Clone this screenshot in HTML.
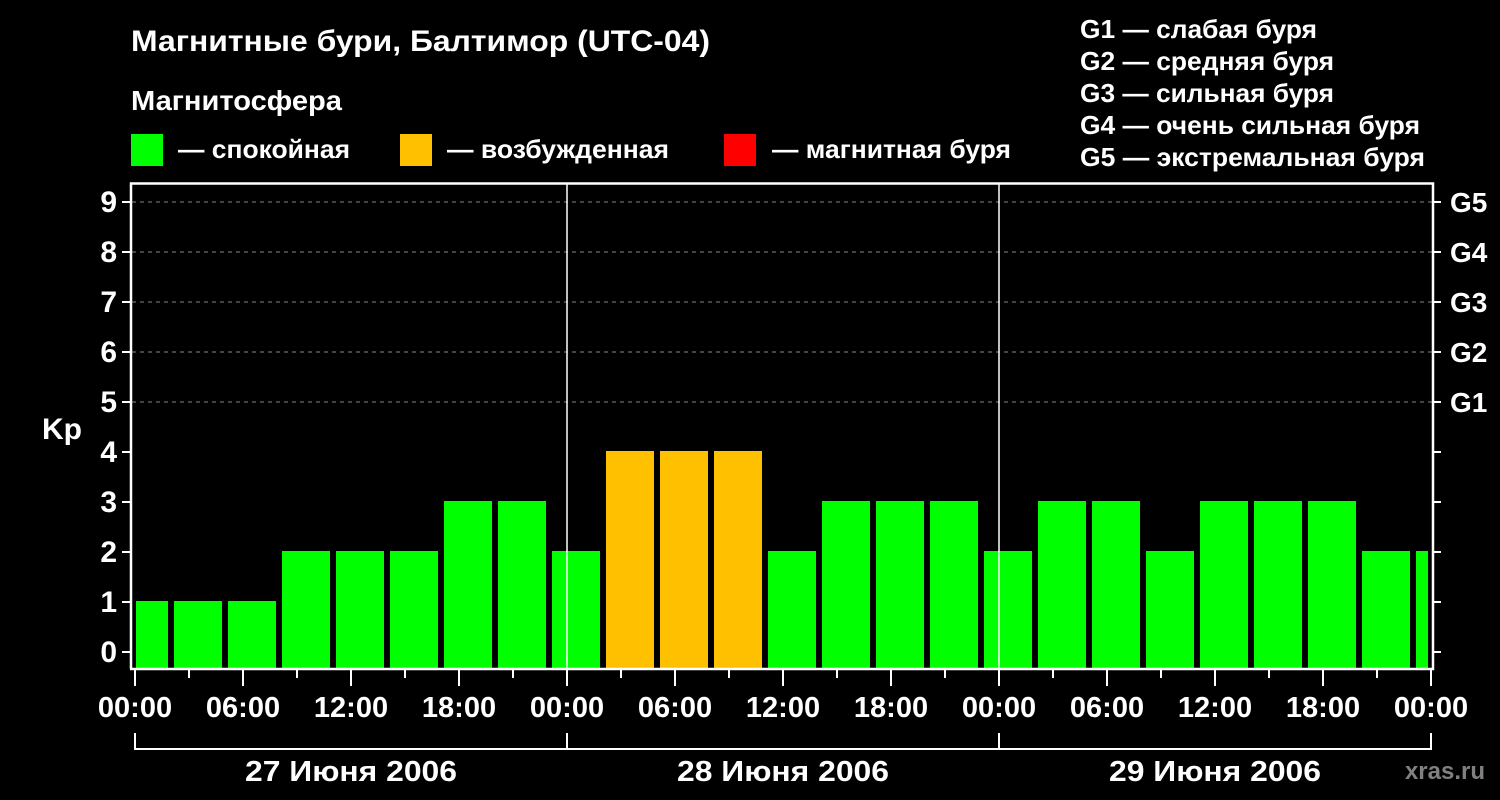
<!DOCTYPE html>
<html><head><meta charset="utf-8"><style>
html,body{margin:0;padding:0;background:#000;width:1500px;height:800px;overflow:hidden}
svg{display:block;font-family:"Liberation Sans",Arial,sans-serif;font-weight:bold}
</style></head><body>
<svg width="1500" height="800" viewBox="0 0 1500 800" xmlns="http://www.w3.org/2000/svg">
<rect width="1500" height="800" fill="#000"/>
<g fill="#fff">
<text x="131" y="51" font-size="30" textLength="579" lengthAdjust="spacingAndGlyphs">Магнитные бури, Балтимор (UTC-04)</text>
<text x="131" y="110" font-size="28" textLength="211" lengthAdjust="spacingAndGlyphs">Магнитосфера</text>
<text x="178" y="158" font-size="26" textLength="172" lengthAdjust="spacingAndGlyphs">— спокойная</text>
<text x="447" y="158" font-size="26" textLength="222" lengthAdjust="spacingAndGlyphs">— возбужденная</text>
<text x="772" y="158" font-size="26" textLength="239" lengthAdjust="spacingAndGlyphs">— магнитная буря</text>
<g font-size="26">
<text x="1080" y="38" textLength="237" lengthAdjust="spacingAndGlyphs">G1 — слабая буря</text>
<text x="1080" y="70" textLength="254" lengthAdjust="spacingAndGlyphs">G2 — средняя буря</text>
<text x="1080" y="102" textLength="254" lengthAdjust="spacingAndGlyphs">G3 — сильная буря</text>
<text x="1080" y="134" textLength="340" lengthAdjust="spacingAndGlyphs">G4 — очень сильная буря</text>
<text x="1080" y="166" textLength="345" lengthAdjust="spacingAndGlyphs">G5 — экстремальная буря</text>
</g>
</g>
<rect x="131" y="134" width="32" height="32" fill="#00ff00"/>
<rect x="400" y="134" width="32" height="32" fill="#ffc000"/>
<rect x="724" y="134" width="32" height="32" fill="#ff0000"/>

<g stroke="#888" stroke-width="1" stroke-dasharray="4 4">
<line x1="132" y1="202" x2="1433" y2="202"/>
<line x1="132" y1="252" x2="1433" y2="252"/>
<line x1="132" y1="302" x2="1433" y2="302"/>
<line x1="132" y1="352" x2="1433" y2="352"/>
<line x1="132" y1="402" x2="1433" y2="402"/>
</g>
<g fill="#00ff00">
<rect x="136" y="601" width="32" height="67"/>
<rect x="174" y="601" width="48" height="67"/>
<rect x="228" y="601" width="48" height="67"/>
<rect x="282" y="551" width="48" height="117"/>
<rect x="336" y="551" width="48" height="117"/>
<rect x="390" y="551" width="48" height="117"/>
<rect x="444" y="501" width="48" height="167"/>
<rect x="498" y="501" width="48" height="167"/>
<rect x="552" y="551" width="48" height="117"/>
<rect x="768" y="551" width="48" height="117"/>
<rect x="822" y="501" width="48" height="167"/>
<rect x="876" y="501" width="48" height="167"/>
<rect x="930" y="501" width="48" height="167"/>
<rect x="984" y="551" width="48" height="117"/>
<rect x="1038" y="501" width="48" height="167"/>
<rect x="1092" y="501" width="48" height="167"/>
<rect x="1146" y="551" width="48" height="117"/>
<rect x="1200" y="501" width="48" height="167"/>
<rect x="1254" y="501" width="48" height="167"/>
<rect x="1308" y="501" width="48" height="167"/>
<rect x="1362" y="551" width="48" height="117"/>
<rect x="1416" y="551" width="12" height="117"/>
</g>
<g fill="#ffc000">
<rect x="606" y="451" width="48" height="217"/>
<rect x="660" y="451" width="48" height="217"/>
<rect x="714" y="451" width="48" height="217"/>
</g>
<g stroke="#fff" fill="none">
<line x1="567" y1="183" x2="567" y2="668" stroke-width="1.5"/>
<line x1="999" y1="183" x2="999" y2="668" stroke-width="1.5"/>
<polyline points="131,669 131,183.5 1433,183.5 1433,669 130,669" stroke-width="2.5"/>
<g stroke-width="2">
<path d="M122 202h9M122 252h9M122 302h9M122 352h9M122 402h9M122 452h9M122 502h9M122 552h9M122 602h9M122 652h9"/>
<path d="M1433 202h8M1433 252h8M1433 302h8M1433 352h8M1433 402h8M1433 452h8M1433 502h8M1433 552h8M1433 602h8M1433 652h8"/>
<path d="M135 669v17M243 669v17M351 669v17M459 669v17M567 669v17M675 669v17M783 669v17M891 669v17M999 669v17M1107 669v17M1215 669v17M1323 669v17M1431 669v17"/>
<path d="M189 669v9M297 669v9M405 669v9M513 669v9M621 669v9M729 669v9M837 669v9M945 669v9M1053 669v9M1161 669v9M1269 669v9M1377 669v9"/>
<path d="M135 733v16H1431V733M567 733v16M999 733v16"/>
</g>
</g>
<g fill="#fff" font-size="30">
<g text-anchor="end">
<text x="117" y="212">9</text><text x="117" y="262">8</text><text x="117" y="312">7</text><text x="117" y="362">6</text><text x="117" y="412">5</text>
<text x="117" y="462">4</text><text x="117" y="512">3</text><text x="117" y="562">2</text><text x="117" y="612">1</text><text x="117" y="662">0</text>
</g>
<text x="42" y="439" font-size="30">Kp</text>
<g font-size="28">
<text x="1450" y="212">G5</text><text x="1450" y="262">G4</text><text x="1450" y="312">G3</text><text x="1450" y="362">G2</text><text x="1450" y="412">G1</text>
</g>
<g text-anchor="middle" font-size="29">
<text x="135" y="717">00:00</text><text x="243" y="717">06:00</text><text x="351" y="717">12:00</text><text x="459" y="717">18:00</text>
<text x="567" y="717">00:00</text><text x="675" y="717">06:00</text><text x="783" y="717">12:00</text><text x="891" y="717">18:00</text>
<text x="999" y="717">00:00</text><text x="1107" y="717">06:00</text><text x="1215" y="717">12:00</text><text x="1323" y="717">18:00</text>
<text x="1431" y="717">00:00</text>
<text x="351" y="781" textLength="212" lengthAdjust="spacingAndGlyphs">27 Июня 2006</text>
<text x="783" y="781" textLength="212" lengthAdjust="spacingAndGlyphs">28 Июня 2006</text>
<text x="1215" y="781" textLength="212" lengthAdjust="spacingAndGlyphs">29 Июня 2006</text>
</g>
</g>
<text x="1485" y="779" font-size="24" fill="#808080" text-anchor="end">xras.ru</text>
</svg>
</body></html>
